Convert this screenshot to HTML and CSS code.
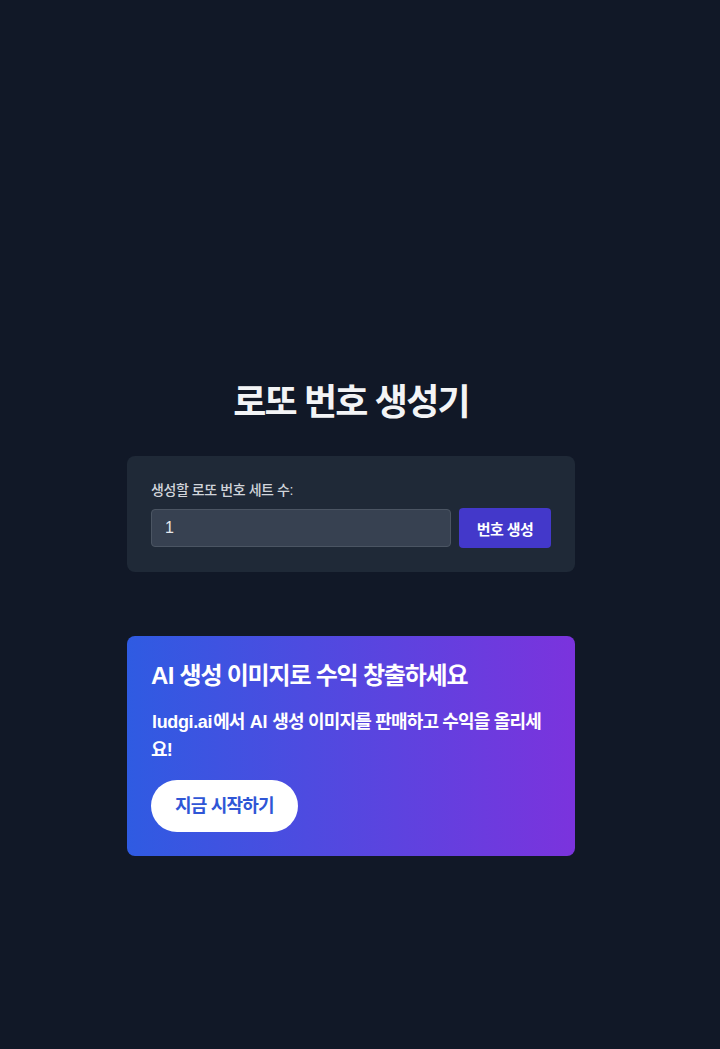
FILE: index.html
```html
<!DOCTYPE html>
<html lang="ko">
<head>
<meta charset="utf-8">
<title>로또 번호 생성기</title>
<link rel="stylesheet" href="styles.css">
</head>
<body>
<main class="page">
  <h1 class="title">로또 번호 생성기</h1>
  <section class="panel">
    <label class="label" for="sets">생성할 로또 번호 세트 수:</label>
    <div class="row">
      <input id="sets" class="input" type="number" value="1">
      <button class="btn" type="button">번호 생성</button>
    </div>
  </section>
  <section class="promo">
    <h2 class="promo-title"><span class="latin">AI</span> 생성 이미지로 수익 창출하세요</h2>
    <p class="promo-text"><span class="latin">ludgi.ai</span>에서 <span class="latin">AI</span> 생성 이미지를 판매하고 수익을 올리세요!</p>
    <a class="promo-btn" href="#">지금 시작하기</a>
  </section>
</main>
</body>
</html>
```

FILE: styles.css
```css
* { box-sizing: border-box; }
html, body { margin: 0; padding: 0; }
body {
  background: #111827;
  font-family: "Liberation Sans", "Noto Sans CJK KR", sans-serif;
  color: #f3f4f6;
  min-height: 1049px;
  padding-right: 18px;
}
.latin { letter-spacing: -0.02em; }
.page {
  width: 448px;
  margin: 0 auto;
  padding-top: 383px;
}
.title {
  margin: 0 0 33px;
  font-size: 36px;
  line-height: 40px;
  font-weight: 700;
  letter-spacing: -0.05em;
  text-align: center;
  color: #f3f4f6;
}
.panel {
  background: #1f2937;
  border-radius: 8px;
  padding: 24px;
}
.label {
  display: block;
  font-size: 14px;
  line-height: 20px;
  font-weight: 500;
  letter-spacing: -0.03em;
  color: #d1d5db;
  margin-bottom: 8px;
}
.row {
  display: flex;
  align-items: center;
  gap: 8px;
}
.input {
  flex: 1;
  min-width: 0;
  height: 38px;
  background: #374151;
  border: 1px solid #4b5563;
  border-radius: 4px;
  color: #e5e7eb;
  font-family: inherit;
  font-size: 16px;
  padding: 0 13px;
  outline: none;
}
.input::-webkit-inner-spin-button,
.input::-webkit-outer-spin-button { -webkit-appearance: none; margin: 0; }
.btn {
  height: 40px;
  width: 92px;
  padding: 0;
  background: #4338ca;
  color: #ffffff;
  border: 0;
  border-radius: 4px;
  font-family: inherit;
  font-size: 15px;
  letter-spacing: -0.04em;
  font-weight: 700;
}
.promo {
  margin-top: 64px;
  border-radius: 8px;
  padding: 24px;
  background: linear-gradient(to right, #2f5be2, #7b33dd);
  color: #ffffff;
}
.promo-title {
  margin: 0 0 16px;
  font-size: 24px;
  line-height: 32px;
  font-weight: 700;
  letter-spacing: -0.05em;
}
.promo-text {
  margin: 0 0 16px;
  font-size: 18px;
  line-height: 28px;
  font-weight: 600;
  letter-spacing: -0.045em;
}
.promo-text .latin {
  margin: 0 1px;
}
.promo-btn {
  display: inline-block;
  background: #ffffff;
  color: #2f56d6;
  text-decoration: none;
  font-size: 18px;
  line-height: 28px;
  font-weight: 700;
  letter-spacing: -0.045em;
  padding: 12px 24px;
  border-radius: 9999px;
}
```
